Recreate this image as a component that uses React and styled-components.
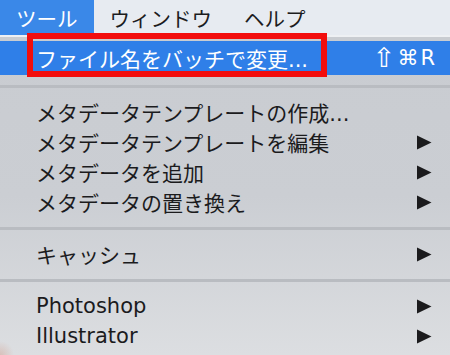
import React from "react";
import styled, { createGlobalStyle } from "styled-components";

const GlobalStyle = createGlobalStyle`
  html, body {
    margin: 0;
    padding: 0;
    width: 450px;
    height: 355px;
    overflow: hidden;
  }
  body {
    font-family: "DejaVu Sans", "Noto Sans CJK JP", sans-serif;
  }
`;

//Data
const groups = [
  [{ label: "ファイル名をバッチで変更...", shortcut: ["⇧", "⌘", "R"], active: true }],
  [
    { label: "メタデータテンプレートの作成..." },
    { label: "メタデータテンプレートを編集", sub: true },
    { label: "メタデータを追加", sub: true },
    { label: "メタデータの置き換え", sub: true },
  ],
  [{ label: "キャッシュ", sub: true }],
  [
    { label: "Photoshop", sub: true },
    { label: "Illustrator", sub: true },
  ],
];

const Arrow = () => (
  <svg width="16" height="15" viewBox="0 0 16 15">
    <polygon points="1,0.5 15.5,7.5 1,14.5" fill="#1b1b1d" />
  </svg>
);

const App = () => {
  return (
    <>
      <GlobalStyle />
      <Screen>
        <MenuBar>
          <BarItem $open>ツール</BarItem>
          <BarItem>ウィンドウ</BarItem>
          <BarItem>ヘルプ</BarItem>
        </MenuBar>
        <Menu>
          {groups.map((group, i) => (
            <React.Fragment key={i}>
              {i > 0 && <Separator />}
              {group.map((item) => (
                <Item key={item.label} $active={item.active}>
                  <Label>{item.label}</Label>
                  {item.shortcut && (
                    <Shortcut>
                      {item.shortcut.map((k) => (
                        <Key key={k} $big={k === "⇧"}>
                          {k}
                        </Key>
                      ))}
                    </Shortcut>
                  )}
                  {item.sub && <Arrow />}
                </Item>
              ))}
            </React.Fragment>
          ))}
        </Menu>
        <Highlight />
      </Screen>
    </>
  );
};

const Screen = styled.div`
  position: relative;
  width: 450px;
  height: 355px;
  display: flex;
  flex-direction: column;
  background: #d3d5d9;
`;

const MenuBar = styled.div`
  height: 35px;
  display: flex;
  align-items: stretch;
  background: #e7ebf1;
  border-bottom: 2px solid #eef0f3;
`;

const BarItem = styled.div`
  display: flex;
  align-items: center;
  padding: 0 16px;
  font-size: 20.5px;
  white-space: nowrap;
  color: ${(p) => (p.$open ? "#fff" : "#1c1c1e")};
  background: ${(p) => (p.$open ? "#3a88e8" : "transparent")};
`;

const Menu = styled.div`
  flex: 1;
  padding-top: 4px;
  display: flex;
  flex-direction: column;
  background:
    radial-gradient(circle at 0 100%, rgba(214, 180, 170, 0.7) 0, rgba(214, 180, 170, 0) 14px),
    linear-gradient(180deg, #c9ccd1 0%, #cbced3 50%, #dcdee1 100%);
`;

const Item = styled.div`
  height: ${(p) => (p.$active ? "34px" : "30px")};
  display: flex;
  align-items: center;
  padding: 0 18px 0 36px;
  font-size: 21px;
  color: ${(p) => (p.$active ? "#fff" : "#1b1b1d")};
  background: ${(p) => (p.$active ? "#2f7fe8" : "transparent")};
`;

const Label = styled.span`
  flex: 1;
  white-space: nowrap;
`;

const Shortcut = styled.span`
  display: flex;
  align-items: center;
  gap: 2px;
  margin-right: -3px;
`;

const Key = styled.span`
  font-size: ${(p) => (p.$big ? "27px" : "21px")};
  line-height: 1;
  margin-top: ${(p) => (p.$big ? "-2px" : "0")};
`;

const Separator = styled.div`
  height: 22px;
  display: flex;
  align-items: center;
  &::before {
    content: "";
    flex: 1;
    height: 3px;
    background: #b9bcc1;
  }
`;

//Annotation box drawn over the menu
const Highlight = styled.div`
  position: absolute;
  left: 27px;
  top: 33px;
  width: 288px;
  height: 32px;
  border: 6px solid #f20d0d;
`;

export default App;
